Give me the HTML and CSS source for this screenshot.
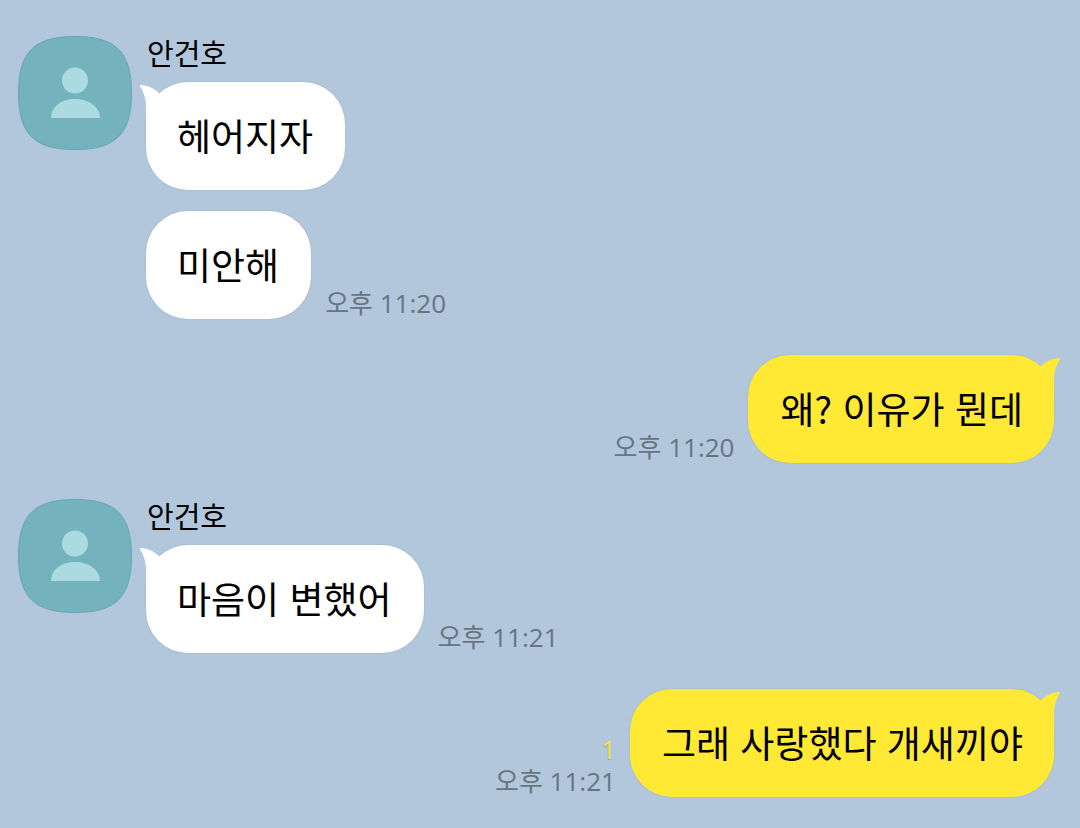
FILE: index.html
```html
<!DOCTYPE html>
<html lang="ko">
<head>
<meta charset="utf-8">
<meta name="viewport" content="width=device-width, initial-scale=1">
<title>안건호</title>
<link rel="stylesheet" href="styles.css">
</head>
<body>
<svg class="defs" aria-hidden="true">
  <symbol id="avatar" viewBox="0 0 114 114">
    <path d="M.5 57C.5 16 16 .5 57 .5S113.500 16 113.500 57 98 113.500 57 113.500 .5 98 .5 57Z" fill="#74b3be" stroke="#68a5b3"/>
    <circle cx="57" cy="44.500" r="13" fill="#abdae1"/>
    <path d="M33 82C33 71 43 63 57 63S82 71 82 82Z" fill="#abdae1"/>
  </symbol>
  <symbol id="tail" viewBox="0 0 30 42">
    <path d="M0 4.500C-.5 3.300 .5 2.700 2 3C9 4 14 6.500 19 11L30 20V42H6V24C6 16 3 9 0 4.500Z" fill="currentColor"/>
  </symbol>
</svg>
<main class="chat">
  <section class="group received">
    <svg class="avatar" role="img" aria-label="프로필"><use href="#avatar"/></svg>
    <div class="messages">
      <h2 class="name">안건호</h2>
      <div class="row"><p class="bubble">헤어지자<svg class="tail" aria-hidden="true"><use href="#tail"/></svg></p></div>
      <div class="row"><p class="bubble">미안해</p><div class="meta"><time datetime="23:20">오후 11:20</time></div></div>
    </div>
  </section>
  <section class="group sent">
    <div class="row"><div class="meta"><time datetime="23:20">오후 11:20</time></div><p class="bubble">왜? 이유가 뭔데<svg class="tail" aria-hidden="true"><use href="#tail"/></svg></p></div>
  </section>
  <section class="group received">
    <svg class="avatar" role="img" aria-label="프로필"><use href="#avatar"/></svg>
    <div class="messages">
      <h2 class="name">안건호</h2>
      <div class="row"><p class="bubble">마음이 변했어<svg class="tail" aria-hidden="true"><use href="#tail"/></svg></p><div class="meta"><time datetime="23:21">오후 11:21</time></div></div>
    </div>
  </section>
  <section class="group sent">
    <div class="row"><div class="meta"><span class="unread">1</span><time datetime="23:21">오후 11:21</time></div><p class="bubble">그래 사랑했다 개새끼야<svg class="tail" aria-hidden="true"><use href="#tail"/></svg></p></div>
  </section>
</main>
</body>
</html>
```
FILE: styles.css
```css
* { box-sizing: border-box; }

body {
  margin: 0;
  background: #b2c7db;
  color: #000;
  font-family: "Noto Sans CJK KR", sans-serif;
}

.defs {
  position: absolute;
  width: 0;
  height: 0;
}

.chat {
  display: flex;
  flex-direction: column;
  gap: 36px;
  padding: 36px 26px 32px 18px;
}

.group {
  display: flex;
  gap: 14px;
}

.avatar {
  flex: none;
  width: 114px;
  height: 114px;
}

.messages {
  display: flex;
  flex-direction: column;
  gap: 21px;
}

.name {
  margin: 0 0 -7px 1px;
  font-size: 29px;
  font-weight: 400;
  line-height: 32px;
}

.row {
  display: flex;
  align-items: flex-end;
  gap: 14px;
}

.sent { justify-content: flex-end; }

.bubble {
  position: relative;
  margin: 0;
  padding: 31px 32px 33px 31px;
  border-radius: 42px;
  background: #fff;
  box-shadow: 0 0 2px rgba(70, 95, 120, .2);
  font-size: 37px;
  line-height: 44px;
}

.tail {
  position: absolute;
  top: 0;
  left: -6px;
  width: 30px;
  height: 42px;
  color: #fff;
}

.sent .bubble {
  padding-right: 31px;
  padding-left: 32px;
  background: #ffe934;
}

.sent .tail {
  right: -6px;
  left: auto;
  color: #ffe934;
  transform: scaleX(-1);
}

.meta {
  display: flex;
  flex-direction: column;
  align-items: flex-end;
  color: #66757f;
  font-family: "Open Sans", "Noto Sans CJK KR", sans-serif;
  font-size: 26px;
  font-weight: 400;
  line-height: 32px;
}

.unread {
  color: #f8e64b;
  font-size: 25px;
  text-shadow: 0 1px 1px rgba(80, 90, 90, .4);
}
```
